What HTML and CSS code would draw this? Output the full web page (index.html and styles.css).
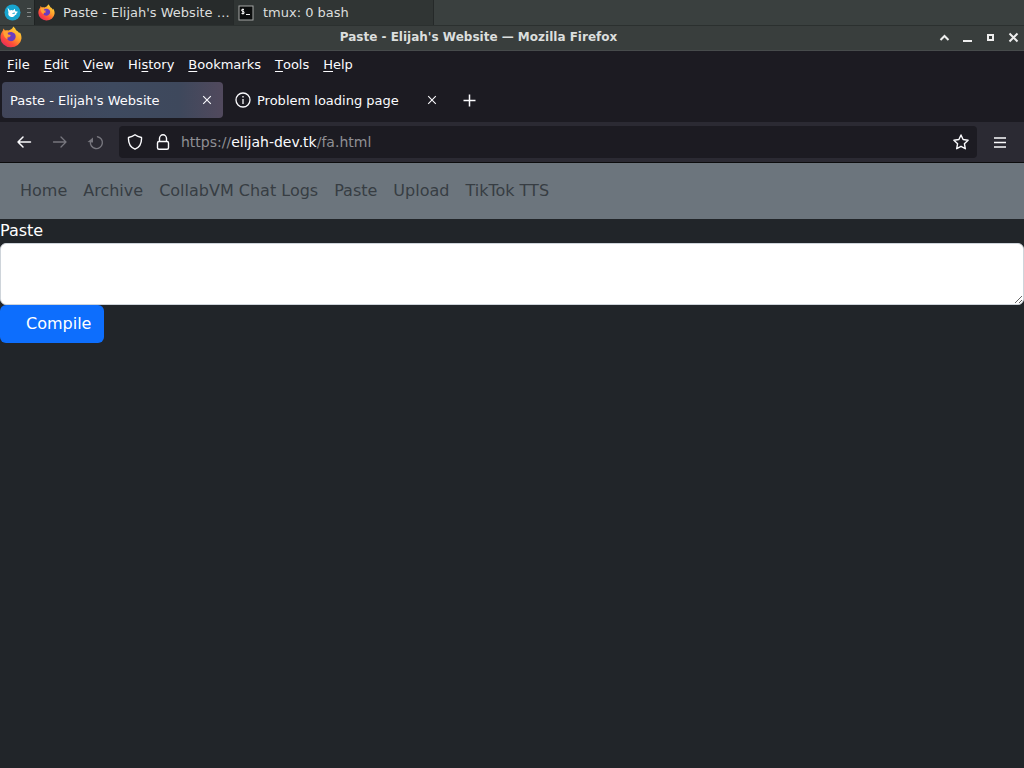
FILE: index.html
```html
<!DOCTYPE html>
<html lang="en">
<head>
<meta charset="utf-8">
<title>Paste - Elijah's Website</title>
<link rel="stylesheet" href="styles.css">
</head>
<body>
<svg class="defs" aria-hidden="true">
  <defs>
    <linearGradient id="flame" x1="0.85" y1="0.1" x2="0.2" y2="0.95">
      <stop offset="0" stop-color="#ffd83a"/>
      <stop offset="0.4" stop-color="#ff9a2b"/>
      <stop offset="0.7" stop-color="#ff5038"/>
      <stop offset="1" stop-color="#e62a5c"/>
    </linearGradient>
    <symbol id="firefox" viewBox="0 0 24 24">
      <path fill="url(#flame)" d="M14.5 0.5c1.600 1.400 2.500 2.600 3 4 2 1 3 2.200 3.400 3.500l.7-1.200c1.500 2.400 2 4.600 1.800 7A11.500 10.800 0 0 1 .5 13C.4 9.500 1.500 7 3.200 5l.4-2.200 2 2.200c1.400-.5 2.600-.4 3.700 0C11 4.400 13.500 3.400 14.500.5z"/>
      <path fill="#6a3cc0" d="M8 8c2-1.600 4-1.600 6-1 2.600 1 3.500 3 3 5.500-.6 2.600-2.700 4-5 4-2.800 0-4.800-1.800-4.700-4.200 1.200.6 3 .4 4.200-.8-1.500-.3-3-1.300-3.500-3.500z"/>
      <path fill="#ffa035" d="M3.500 6c1.500-1 3.500-1 5.500.2C8 7 8 8 9 9.200l2.800.5c-.4 1.300-1.800 1.300-3 1.800-1 .6-1 2-.1 3C6 14 3.500 11 3.500 6z"/>
    </symbol>
    <symbol id="terminal" viewBox="0 0 16 16">
      <rect x="1" y="1" width="14" height="14" fill="#0b0d0d" stroke="#a5a8a6"/>
      <path d="M6 4.500H3.800V6L6 6.800v1.700H3.500M4.900 3.500v6M8 9.500h4" fill="none" stroke="#f2f2f2"/>
    </symbol>
    <symbol id="close" viewBox="0 0 10 10">
      <path d="M1.200 1.200l7.600 7.600M8.800 1.200L1.200 8.800" fill="none" stroke="currentColor" stroke-width="1.100"/>
    </symbol>
  </defs>
</svg>

<header class="desktop-bar">
  <button class="launcher" aria-label="Applications">
    <svg width="17" height="17" viewBox="0 0 17 17"><circle cx="8.500" cy="8.500" r="8" fill="#18a5cf"/><path fill="#fff" d="M3.500 3.500l2.300 3C7 5.800 8 5.800 9 6.500l1.800-1.700.5 2.400 2.700.6-1.500 1.400-.3 1.500-1.200.2c-.6 1.600-2.300 2.300-4 2C4.800 12.500 3.700 10.500 4.500 8.500z"/><path d="M8.500 9.500l2.500-.5" stroke="#18a5cf"/></svg>
  </button>
  <span class="grip"></span>
  <button class="task task-active"><svg width="17" height="17"><use href="#firefox"/></svg><span class="task-label">Paste - Elijah's Website …</span></button>
  <button class="task"><svg width="16" height="16"><use href="#terminal"/></svg><span class="task-label">tmux: 0 bash</span></button>
</header>

<div class="titlebar">
  <svg width="22" height="22"><use href="#firefox"/></svg>
  <span class="window-title">Paste - Elijah's Website — Mozilla Firefox</span>
  <div class="window-buttons">
    <button aria-label="Shade"><svg width="11" height="11" viewBox="0 0 11 11"><path d="M1.500 8l4-4 4 4" fill="none" stroke="#eee" stroke-width="2"/></svg></button>
    <button aria-label="Minimize"><svg width="11" height="11" viewBox="0 0 11 11"><path d="M1 9h9" stroke="#eee" stroke-width="2"/></svg></button>
    <button aria-label="Maximize"><svg width="11" height="11" viewBox="0 0 11 11"><rect x="3" y="3" width="5" height="5" fill="none" stroke="#eee" stroke-width="2"/></svg></button>
    <button aria-label="Close"><svg width="11" height="11" viewBox="0 0 11 11"><path d="M1.500 1.500l8 8M9.500 1.500l-8 8" stroke="#eee" stroke-width="2"/></svg></button>
  </div>
</div>

<nav class="menubar" aria-label="Menu">
  <button><u>F</u>ile</button>
  <button><u>E</u>dit</button>
  <button><u>V</u>iew</button>
  <button>Hi<u>s</u>tory</button>
  <button><u>B</u>ookmarks</button>
  <button><u>T</u>ools</button>
  <button><u>H</u>elp</button>
</nav>

<div class="tabs">
  <div class="tab tab-selected">
    <button class="tab-label">Paste - Elijah's Website</button>
    <button class="tab-close" aria-label="Close tab"><svg width="10" height="10"><use href="#close"/></svg></button>
  </div>
  <div class="tab">
    <svg width="16" height="16" viewBox="0 0 16 16"><g fill="none" stroke="#fbfbfe" stroke-width="1.300"><circle cx="8" cy="8" r="7"/><path d="M8 7v5M8 4v1.500"/></g></svg>
    <button class="tab-label">Problem loading page</button>
    <button class="tab-close" aria-label="Close tab"><svg width="10" height="10"><use href="#close"/></svg></button>
  </div>
  <button class="new-tab" aria-label="New tab"><svg width="13" height="13" viewBox="0 0 13 13"><path d="M6.500 .5v12M.5 6.500h12" stroke="#fbfbfe" stroke-width="1.500"/></svg></button>
</div>

<div class="toolbar">
  <button class="tool" aria-label="Back"><svg width="16" height="16" viewBox="0 0 16 16"><path d="M14.500 8H2M7 3L2 8l5 5" fill="none" stroke="currentColor" stroke-width="1.500" stroke-linecap="round" stroke-linejoin="round"/></svg></button>
  <button class="tool tool-dim" aria-label="Forward"><svg width="16" height="16" viewBox="0 0 16 16"><path d="M1.500 8H14M9 3l5 5-5 5" fill="none" stroke="currentColor" stroke-width="1.300" stroke-linecap="round" stroke-linejoin="round"/></svg></button>
  <button class="tool tool-dim" aria-label="Reload"><svg width="18" height="16" viewBox="0 0 18 16"><path d="M10.500 2.700A6 6 0 1 1 3.500 7.500" fill="none" stroke="currentColor" stroke-width="1.400" stroke-linecap="round"/><path d="M.5 8L6 3.500V8.500z" fill="currentColor"/></svg></button>
  <div class="urlbar">
    <svg width="16" height="16" viewBox="0 0 16 16"><path d="M8 .8c2 1.500 4 2.200 6.500 2.700.3 5-1.500 9.500-6.500 11.700C3 13 1.200 8.500 1.500 3.500 4 3 6 2.300 8 .8z" fill="none" stroke="#fbfbfe" stroke-width="1.400" stroke-linejoin="round"/></svg>
    <svg width="16" height="16" viewBox="0 0 16 16"><g fill="none" stroke="#fbfbfe" stroke-width="1.400"><rect x="2.500" y="7.500" width="11" height="7.700" rx="1.500"/><path d="M4.500 7.500V4.500a3.500 3.700 0 0 1 7 0v3"/></g></svg>
    <a class="address" href="#">https://<span class="domain">elijah-dev.tk</span>/fa.html</a>
    <button class="star" aria-label="Bookmark"><svg width="16" height="16" viewBox="0 0 16 16"><path d="M8 1l2.100 4.500 5 .7-3.700 3.500.9 5L8 12.300l-4.300 2.400.9-5L.9 6.200l5-.7z" fill="none" stroke="#fbfbfe" stroke-width="1.400" stroke-linejoin="round"/></svg></button>
  </div>
  <button class="tool" aria-label="Menu"><svg width="12" height="11" viewBox="0 0 12 11"><path d="M0 1h12M0 5.500h12M0 10h12" stroke="#fbfbfe" stroke-width="1.300"/></svg></button>
</div>

<main class="page">
  <nav class="site-nav" aria-label="Site">
    <a href="#">Home</a>
    <a href="#">Archive</a>
    <a href="#">CollabVM Chat Logs</a>
    <a href="#">Paste</a>
    <a href="#">Upload</a>
    <a href="#">TikTok TTS</a>
  </nav>
  <form class="paste-form">
    <label for="paste">Paste</label>
    <textarea id="paste" rows="2"></textarea>
    <button type="button" class="compile">Compile</button>
  </form>
</main>
</body>
</html>
```
FILE: styles.css
```css
* {
  box-sizing: border-box;
}

body {
  display: flex;
  flex-direction: column;
  min-height: 100vh;
  margin: 0;
  background: #212529;
  color: #fbfbfe;
  font-family: "DejaVu Sans", sans-serif;
  font-size: 13px;
}

button {
  display: flex;
  align-items: center;
  padding: 0;
  border: 0;
  background: none;
  color: inherit;
  font: inherit;
  white-space: nowrap;
}

svg {
  display: block;
  flex: none;
}

.defs {
  position: absolute;
  width: 0;
  height: 0;
}

.desktop-bar {
  display: flex;
  align-items: center;
  height: 26px;
  background: #3a403f;
  border-bottom: 1px solid #2b302f;
  color: #dcdedd;
}

.launcher {
  padding: 0 6px 0 4px;
}

.grip {
  width: 4px;
  height: 10px;
  margin-right: 3px;
  background: repeating-linear-gradient(#858988 0 1px, transparent 1px 4px);
}

.task {
  gap: 9px;
  width: 200px;
  height: 25px;
  padding: 0 4px;
  border-right: 1px solid #252929;
  background: #303534;
}

.task-active {
  gap: 8px;
  background: #272b2b;
  border-left: 1px solid #1f2323;
  padding: 0 3px;
}

.titlebar {
  display: flex;
  align-items: flex-start;
  height: 25px;
  background: #393e3d;
  border-bottom: 1px solid #474b4c;
  color: #dcdedd;
  line-height: 23px;
}

.window-title {
  flex: 1;
  padding-right: 4px;
  font-size: 12px;
  font-weight: bold;
  text-align: center;
}

.window-buttons {
  display: flex;
  gap: 12px;
  padding: 6px 5px 0 0;
}

.menubar {
  display: flex;
  gap: 14px;
  height: 27px;
  padding: 0 7px;
  background: #1c1b22;
}

.menubar u {
  text-underline-offset: 2px;
}

.tabs {
  display: flex;
  align-items: center;
  gap: 4px;
  height: 44px;
  padding: 0 2px;
  background: #1c1b22;
}

.tab {
  display: flex;
  align-items: center;
  gap: 6px;
  width: 221px;
  height: 36px;
  padding: 0 11px 0 8px;
  border-radius: 4px;
}

.tab-selected {
  background: linear-gradient(90deg, #414559, #3e4a5f 50%, #3e485c 80%, #51495d);
}

.tab-label {
  flex: 1;
}

.new-tab {
  padding: 0 11px;
}

.toolbar {
  display: flex;
  align-items: center;
  height: 41px;
  padding: 0 8px;
  background: #2b2a33;
  border-bottom: 1px solid #0c0c0d;
}

.tool {
  justify-content: center;
  width: 32px;
  height: 32px;
  margin-right: 4px;
}

.tool:last-child {
  margin: 0 0 0 7px;
}

.tool-dim {
  color: #77767e;
}

.urlbar {
  display: flex;
  flex: 1;
  align-items: center;
  gap: 12px;
  height: 32px;
  margin-left: 3px;
  padding: 0 8px;
  border-radius: 4px;
  background: #1c1b22;
}

.address {
  flex: 1;
  margin-left: -2px;
  color: #8f8f94;
  font-size: 14px;
  text-decoration: none;
}

.domain {
  color: #fbfbfe;
}

.page {
  flex: 1;
  background: #212529;
  font-size: 16px;
  line-height: 24px;
}

.site-nav {
  display: flex;
  gap: 16px;
  padding: 16px 20px;
  background: #6c757d;
}

.site-nav a {
  color: #373d43;
  text-decoration: none;
}

.paste-form {
  display: flex;
  flex-direction: column;
  align-items: flex-start;
  color: #fff;
}

#paste {
  width: 100%;
  min-height: 62px;
  padding: 6px 12px;
  border: 1px solid #ced4da;
  border-radius: 6px;
  background: #fff;
  color: #212529;
  font: inherit;
  resize: vertical;
}

.compile {
  height: 38px;
  padding: 0 13px 0 26px;
  border-radius: 6px;
  background: #0d6efd;
}
```
